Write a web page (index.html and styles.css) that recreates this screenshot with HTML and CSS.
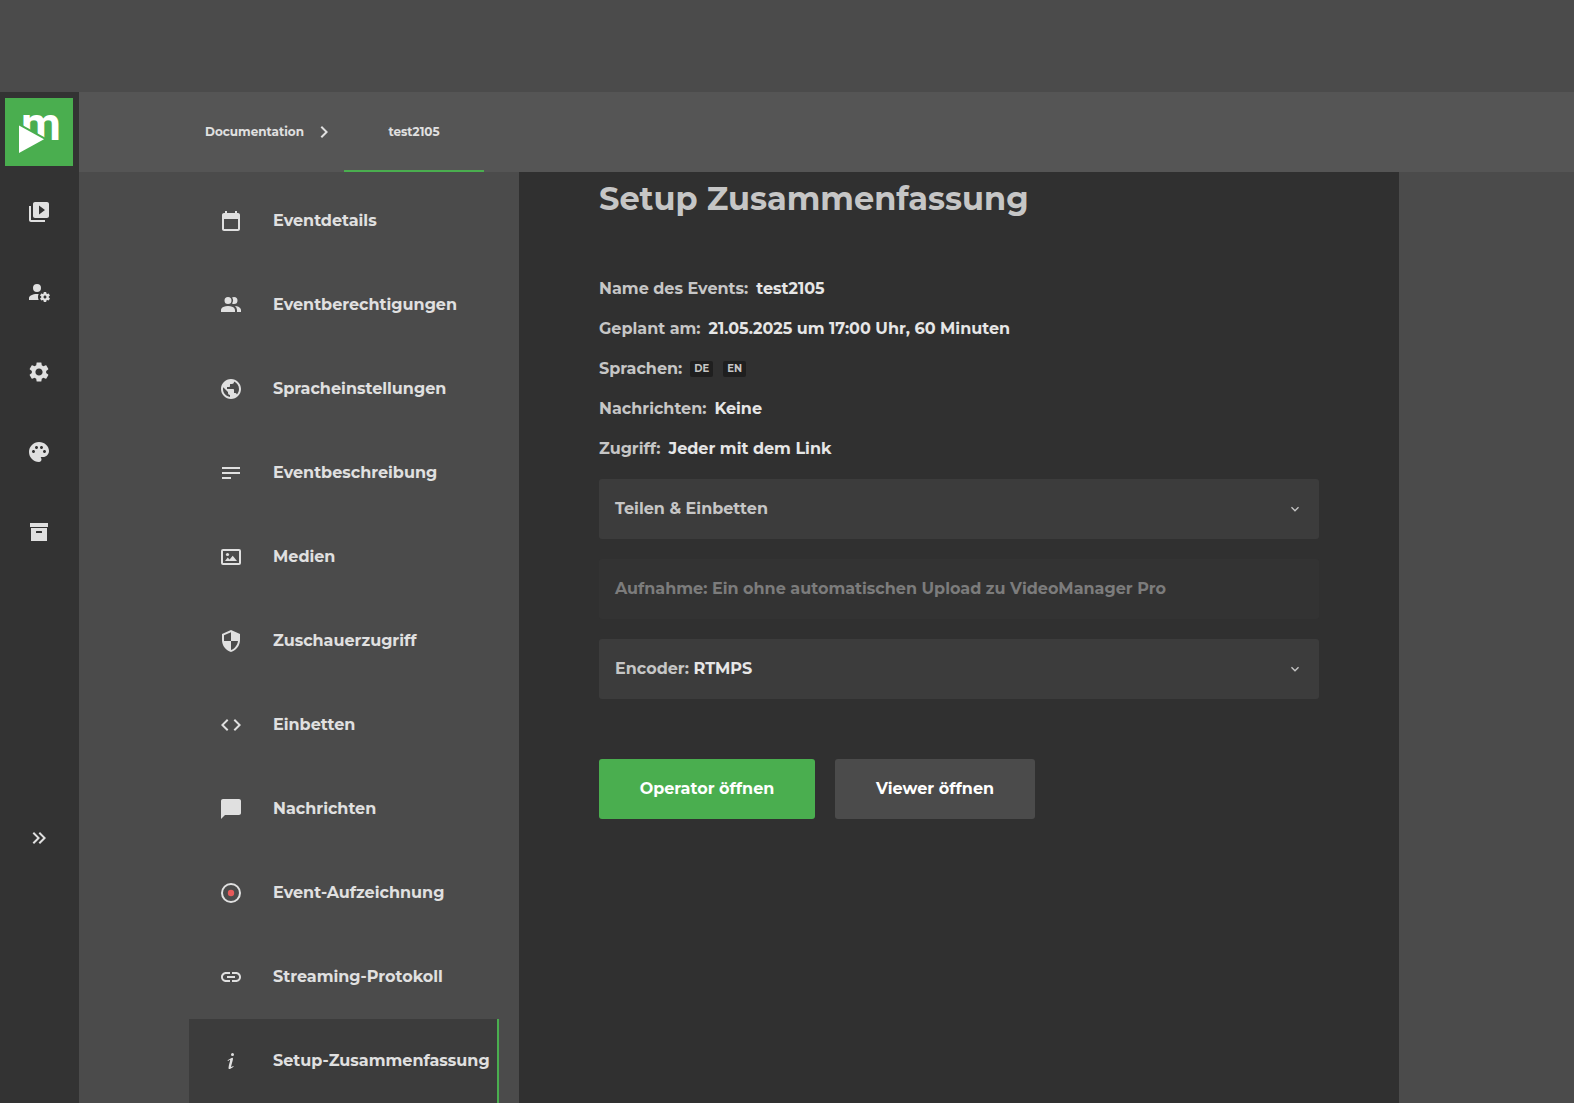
FILE: index.html
```html
<!DOCTYPE html>
<html lang="de">
<head>
<meta charset="utf-8">
<meta name="viewport" content="width=device-width, initial-scale=1">
<title>Setup Zusammenfassung</title>
<link rel="stylesheet" href="styles.css">
</head>
<body>
<div class="app">
  <aside class="rail">
    <a class="rail-slot" href="#" aria-label="Startseite">
      <svg class="logo" viewBox="0 0 68 68">
        <rect width="68" height="68" fill="#4aae4f"/>
        <text class="logo-letter" x="16" y="42">m</text>
        <path d="M14 27.5L39 41.3L14 55z" fill="#fff" stroke="#4aae4f" stroke-width="4" paint-order="stroke"/>
      </svg>
    </a>
    <a class="rail-slot" href="#" aria-label="Videos"><svg class="icon" viewBox="0 0 24 24"><path d="M4 6H2v14c0 1.1.9 2 2 2h14v-2H4V6zm16-4H8c-1.1 0-2 .9-2 2v12c0 1.1.9 2 2 2h12c1.1 0 2-.9 2-2V4c0-1.1-.9-2-2-2zm-8 12.5v-9l6 4.5-6 4.5z"/></svg></a>
    <a class="rail-slot" href="#" aria-label="Benutzerverwaltung"><svg class="icon" viewBox="0 0 24 24"><path d="M10 4A4 4 0 0 0 6 8A4 4 0 0 0 10 12A4 4 0 0 0 14 8A4 4 0 0 0 10 4M17 12C16.87 12 16.76 12.09 16.74 12.21L16.55 13.53C16.25 13.66 15.96 13.82 15.7 14L14.46 13.5C14.35 13.5 14.22 13.5 14.15 13.63L13.15 15.36C13.09 15.47 13.11 15.6 13.21 15.68L14.27 16.5C14.25 16.67 14.24 16.83 14.24 17C14.24 17.17 14.25 17.33 14.27 17.5L13.21 18.32C13.12 18.4 13.09 18.53 13.15 18.64L14.15 20.37C14.21 20.5 14.34 20.5 14.46 20.5L15.7 20C15.96 20.18 16.24 20.35 16.55 20.47L16.74 21.79C16.76 21.91 16.86 22 17 22H19C19.11 22 19.22 21.91 19.24 21.79L19.43 20.47C19.73 20.34 20 20.18 20.27 20L21.5 20.5C21.63 20.5 21.76 20.5 21.83 20.37L22.83 18.64C22.89 18.53 22.86 18.4 22.77 18.32L21.7 17.5C21.72 17.33 21.74 17.17 21.74 17C21.74 16.83 21.73 16.67 21.7 16.5L22.76 15.68C22.85 15.6 22.88 15.47 22.82 15.36L21.82 13.63C21.76 13.5 21.63 13.5 21.5 13.5L20.27 14C20 13.82 19.73 13.65 19.42 13.53L19.23 12.21C19.22 12.09 19.11 12 19 12H17M10 14C5.58 14 2 15.79 2 18V20H11.68A7 7 0 0 1 11 17A7 7 0 0 1 11.64 14.09C11.11 14.03 10.56 14 10 14M18 15.5C18.83 15.5 19.5 16.17 19.5 17C19.5 17.83 18.83 18.5 18 18.5C17.16 18.5 16.5 17.83 16.5 17C16.5 16.17 17.17 15.5 18 15.5Z"/></svg></a>
    <a class="rail-slot" href="#" aria-label="Einstellungen"><svg class="icon" viewBox="0 0 24 24"><path d="M19.14 12.94c.04-.3.06-.61.06-.94 0-.32-.02-.64-.07-.94l2.03-1.58c.18-.14.23-.41.12-.61l-1.92-3.32c-.12-.22-.37-.29-.59-.22l-2.39.96c-.5-.38-1.03-.7-1.62-.94l-.36-2.54c-.04-.24-.24-.41-.48-.41h-3.84c-.24 0-.43.17-.47.41l-.36 2.54c-.59.24-1.13.57-1.62.94l-2.39-.96c-.22-.08-.47 0-.59.22L2.74 8.87c-.12.21-.08.47.12.61l2.03 1.58c-.05.3-.09.63-.09.94s.02.64.07.94l-2.03 1.58c-.18.14-.23.41-.12.61l1.92 3.32c.12.22.37.29.59.22l2.39-.96c.5.38 1.03.7 1.62.94l.36 2.54c.05.24.24.41.48.41h3.84c.24 0 .44-.17.47-.41l.36-2.54c.59-.24 1.13-.56 1.62-.94l2.39.96c.22.08.47 0 .59-.22l1.92-3.32c.12-.22.07-.47-.12-.61l-2.01-1.58zM12 15.6c-1.98 0-3.6-1.62-3.6-3.6s1.62-3.6 3.6-3.6 3.6 1.62 3.6 3.6-1.62 3.6-3.6 3.6z"/></svg></a>
    <a class="rail-slot" href="#" aria-label="Design"><svg class="icon" viewBox="0 0 24 24"><path d="M12 2C6.49 2 2 6.49 2 12s4.49 10 10 10c1.38 0 2.5-1.12 2.5-2.5 0-.61-.23-1.2-.64-1.67-.08-.1-.13-.21-.13-.33 0-.28.22-.5.5-.5H16c3.31 0 6-2.69 6-6 0-4.96-4.49-9-10-9zm5.5 11c-.83 0-1.5-.67-1.5-1.5s.67-1.5 1.5-1.5 1.5.67 1.5 1.5-.67 1.5-1.5 1.5zm-3-4c-.83 0-1.5-.67-1.5-1.5S13.67 6 14.5 6s1.5.67 1.5 1.5S15.33 9 14.5 9zM5 11.5c0-.83.67-1.5 1.5-1.5s1.5.67 1.5 1.5S7.33 13 6.5 13 5 12.33 5 11.5zm6-4c0 .83-.67 1.5-1.5 1.5S8 8.33 8 7.5 8.67 6 9.5 6s1.5.67 1.5 1.5z"/></svg></a>
    <a class="rail-slot" href="#" aria-label="Archiv"><svg class="icon" viewBox="0 0 24 24"><path d="M3 3H21V7H3V3M4 8H20V21H4V8M9.5 11A.5.5 0 0 0 9 11.5V13H15V11.5A.5.5 0 0 0 14.5 11H9.5Z"/></svg></a>
    <button class="rail-slot rail-toggle" type="button" aria-label="Menü ausklappen"><svg class="icon" viewBox="0 0 24 24"><path d="M5.59 7.41L7 6L13 12L7 18L5.59 16.59L10.17 12L5.59 7.41M11.59 7.41L13 6L19 12L13 18L11.59 16.59L16.17 12L11.59 7.41Z"/></svg></button>
  </aside>

  <div class="workspace">
    <nav class="crumbs" aria-label="Brotkrumen">
      <a class="crumb" href="#">Documentation</a>
      <svg class="icon" viewBox="0 0 24 24"><path d="M8.59 16.58L13.17 12L8.59 7.41L10 6L16 12L10 18L8.59 16.58Z"/></svg>
      <a class="crumb crumb-active" href="#" aria-current="page">test2105</a>
    </nav>

    <div class="columns">
      <nav class="menu" aria-label="Event-Menü">
        <a class="menu-item" href="#"><svg class="icon" viewBox="0 0 24 24"><path d="M19 4h-1V2h-2v2H8V2H6v2H5c-1.1 0-2 .9-2 2v14c0 1.1.9 2 2 2h14c1.1 0 2-.9 2-2V6c0-1.1-.9-2-2-2zm0 16H5V10h14v10z"/></svg>Eventdetails</a>
        <a class="menu-item" href="#"><svg class="icon" viewBox="0 0 24 24"><path d="M16 17V19H2V17C2 17 2 13 9 13C16 13 16 17 16 17M12.5 7.5A3.5 3.5 0 0 0 9 4A3.5 3.5 0 0 0 5.5 7.5A3.5 3.5 0 0 0 9 11A3.5 3.5 0 0 0 12.5 7.5M15.94 13A5.32 5.32 0 0 1 18 17V19H22V17C22 17 22 13.37 15.94 13M15 4A3.39 3.39 0 0 0 13.07 4.59A5 5 0 0 1 13.07 10.41A3.39 3.39 0 0 0 15 11A3.5 3.5 0 0 0 18.5 7.5A3.5 3.5 0 0 0 15 4Z"/></svg>Eventberechtigungen</a>
        <a class="menu-item" href="#"><svg class="icon" viewBox="0 0 24 24"><path d="M12 2C6.48 2 2 6.48 2 12s4.48 10 10 10 10-4.48 10-10S17.52 2 12 2zm-1 17.93c-3.95-.49-7-3.85-7-7.93 0-.62.08-1.21.21-1.79L9 15v1c0 1.1.9 2 2 2v1.93zm6.9-2.54c-.26-.81-1-1.39-1.9-1.39h-1v-3c0-.55-.45-1-1-1H8v-2h2c.55 0 1-.45 1-1V7h2c1.1 0 2-.9 2-2v-.41c2.93 1.19 5 4.06 5 7.41 0 2.08-.8 3.97-2.1 5.39z"/></svg>Spracheinstellungen</a>
        <a class="menu-item" href="#"><svg class="icon" viewBox="0 0 24 24"><path d="M3 6h18v2H3zM3 11h18v2H3zM3 16h9v2H3z"/></svg>Eventbeschreibung</a>
        <a class="menu-item" href="#"><svg class="icon" viewBox="0 0 24 24"><path fill-rule="evenodd" d="M4 4H20A2 2 0 0 1 22 6V18A2 2 0 0 1 20 20H4A2 2 0 0 1 2 18V6A2 2 0 0 1 4 4ZM4 6V18H20V6Z"/><circle cx="8.5" cy="9.5" r="1.6"/><path d="M6 16L8.7 12.6L10.6 14.6L13.7 10.7L18 16Z"/></svg>Medien</a>
        <a class="menu-item" href="#"><svg class="icon" viewBox="0 0 24 24"><path d="M12 1L3 5v6c0 5.55 3.84 10.74 9 12 5.16-1.26 9-6.45 9-12V5l-9-4zm0 10.99h7c-.53 4.12-3.28 7.79-7 8.94V12H5V6.3l7-3.11v8.8z"/></svg>Zuschauerzugriff</a>
        <a class="menu-item" href="#"><svg class="icon" viewBox="0 0 24 24"><path d="M9.4 16.6L4.8 12l4.6-4.6L8 6l-6 6 6 6 1.4-1.4zm5.2 0l4.6-4.6-4.6-4.6L16 6l6 6-6 6-1.4-1.4z"/></svg>Einbetten</a>
        <a class="menu-item" href="#"><svg class="icon" viewBox="0 0 24 24"><path d="M20 2H4c-1.1 0-2 .9-2 2v18l4-4h14c1.1 0 2-.9 2-2V4c0-1.1-.9-2-2-2z"/></svg>Nachrichten</a>
        <a class="menu-item" href="#"><svg class="icon" viewBox="0 0 24 24"><circle cx="12" cy="12" r="9" fill="none" stroke="currentColor" stroke-width="2"/><circle cx="12" cy="12" r="3.2" fill="#e85a5a"/></svg>Event-Aufzeichnung</a>
        <a class="menu-item" href="#"><svg class="icon" viewBox="0 0 24 24"><path d="M3.9 12c0-1.71 1.39-3.1 3.1-3.1h4V7H7c-2.76 0-5 2.24-5 5s2.24 5 5 5h4v-1.9H7c-1.71 0-3.1-1.39-3.1-3.1zM8 13h8v-2H8v2zm9-6h-4v1.9h4c1.71 0 3.1 1.39 3.1 3.1s-1.39 3.1-3.1 3.1h-4V17h4c2.76 0 5-2.24 5-5s-2.24-5-5-5z"/></svg>Streaming-Protokoll</a>
        <a class="menu-item menu-item-active" href="#" aria-current="page"><svg class="icon" viewBox="0 0 24 24"><path d="M13.5 4A1.5 1.5 0 0 0 12 5.5A1.5 1.5 0 0 0 13.5 7A1.5 1.5 0 0 0 15 5.5A1.5 1.5 0 0 0 13.5 4M13.14 8.77C11.95 8.87 8.7 11.46 8.7 11.46C8.5 11.61 8.56 11.6 8.72 11.88C8.88 12.15 8.86 12.17 9.05 12.04C9.25 11.91 9.58 11.7 10.13 11.36C12.25 10 10.47 13.14 9.56 18.43C9.2 21.05 11.56 19.7 12.17 19.3C12.77 18.91 14.38 17.8 14.54 17.69C14.76 17.54 14.6 17.42 14.43 17.17C14.31 17 14.19 17.12 14.19 17.12C13.54 17.55 12.35 18.45 12.19 17.88C12 17.31 13.22 13.4 13.89 10.71C14 10.07 14.3 8.67 13.14 8.77Z"/></svg>Setup-Zusammenfassung</a>
      </nav>

      <main class="panel">
        <h1 class="title">Setup Zusammenfassung</h1>
        <dl class="facts">
          <div class="fact"><dt>Name des Events:</dt><dd>test2105</dd></div>
          <div class="fact"><dt>Geplant am:</dt><dd>21.05.2025 um 17:00 Uhr, 60 Minuten</dd></div>
          <div class="fact"><dt>Sprachen:</dt><dd class="badges"><span class="badge">DE</span><span class="badge">EN</span></dd></div>
          <div class="fact"><dt>Nachrichten:</dt><dd>Keine</dd></div>
          <div class="fact"><dt>Zugriff:</dt><dd>Jeder mit dem Link</dd></div>
        </dl>
        <div class="sections">
          <button class="section" type="button" aria-expanded="false"><span>Teilen &amp; Einbetten</span><svg class="icon icon-small" viewBox="0 0 24 24"><path d="M7.41 8.58L12 13.17L16.59 8.58L18 10L12 16L6 10L7.41 8.58Z"/></svg></button>
          <button class="section" type="button" disabled><span>Aufnahme: Ein ohne automatischen Upload zu VideoManager Pro</span></button>
          <button class="section" type="button" aria-expanded="false"><span>Encoder: <strong class="value">RTMPS</strong></span><svg class="icon icon-small" viewBox="0 0 24 24"><path d="M7.41 8.58L12 13.17L16.59 8.58L18 10L12 16L6 10L7.41 8.58Z"/></svg></button>
        </div>
        <div class="actions">
          <button class="button button-primary" type="button">Operator öffnen</button>
          <button class="button" type="button">Viewer öffnen</button>
        </div>
      </main>
    </div>
  </div>
</div>
</body>
</html>
```

FILE: styles.css
```css
* {
  box-sizing: border-box;
}

body {
  margin: 0;
  background: #4b4b4b;
  color: #e0e0e0;
  font: 700 16px/20px Montserrat, Inter, sans-serif;
}

a {
  color: inherit;
  text-decoration: none;
}

button {
  border: 0;
  background: none;
  color: inherit;
  font: inherit;
  cursor: pointer;
}

.app {
  display: flex;
  min-height: 100vh;
  padding-top: 92px;
}

.icon {
  flex: none;
  width: 24px;
  height: 24px;
  fill: currentColor;
}

.icon-small {
  width: 16px;
  height: 16px;
}

/* Icon rail */
.rail {
  display: flex;
  flex: none;
  flex-direction: column;
  width: 79px;
  padding-right: 1px;
  background: #333;
}

.rail-slot {
  display: flex;
  align-items: center;
  justify-content: center;
  height: 80px;
  padding: 0;
}

.rail-toggle {
  margin: auto 0;
}

.logo {
  width: 68px;
  height: 68px;
  overflow: visible;
}

.logo-letter {
  fill: #fff;
  font: 700 46px Roboto, sans-serif;
}

/* Breadcrumb bar */
.workspace {
  display: flex;
  flex: 1;
  flex-direction: column;
  min-width: 0;
}

.crumbs {
  display: flex;
  align-items: center;
  gap: 8px;
  height: 80px;
  padding-left: 126px;
  background: #555;
  font-size: 12px;
}

.crumb {
  line-height: 80px;
}

.crumb-active {
  min-width: 140px;
  box-shadow: inset 0 -2px #4aae4f;
  text-align: center;
}

.columns {
  display: flex;
  flex: 1;
  gap: 20px;
  padding-left: 110px;
}

/* Event menu */
.menu {
  flex: none;
  width: 310px;
  padding-top: 7px;
}

.menu-item {
  display: flex;
  align-items: center;
  gap: 30px;
  height: 84px;
  padding-left: 30px;
  white-space: nowrap;
}

.menu-item-active {
  border-right: 2px solid #4aae4f;
  background: #3c3c3c;
}

/* Summary panel */
.panel {
  flex: 1;
  max-width: 880px;
  padding: 7px 80px 80px;
  background: #303030;
  color: #c6c6c6;
}

.title {
  margin: 0 0 60px;
  font-size: 32px;
  line-height: 40px;
}

.facts {
  display: grid;
  gap: 20px;
  margin: 0 0 20px;
}

.fact {
  display: flex;
  gap: 8px;
}

.fact dd {
  margin: 0;
  color: #e6e6e6;
}

.fact .badges {
  display: flex;
  align-items: center;
  gap: 10px;
  color: #c6c6c6;
}

.badge {
  padding: 0 4px;
  border-radius: 2px;
  background: #1f1f1f;
  font-size: 10px;
  line-height: 16px;
}

.sections {
  display: grid;
  gap: 20px;
}

.section {
  display: flex;
  align-items: center;
  justify-content: space-between;
  min-height: 60px;
  padding: 0 16px;
  border-radius: 3px;
  background: #3c3c3c;
  text-align: left;
}

.section:disabled {
  background: #333;
  color: #7c7c7c;
  cursor: default;
}

.value {
  color: #e6e6e6;
  font-weight: inherit;
}

.actions {
  display: flex;
  flex-wrap: wrap;
  gap: 20px;
  margin-top: 60px;
}

.button {
  min-width: 200px;
  height: 60px;
  padding: 0 40px;
  border-radius: 3px;
  background: #4b4b4b;
  color: #fff;
}

.button-primary {
  min-width: 216px;
  background: #4aae4f;
}
```
